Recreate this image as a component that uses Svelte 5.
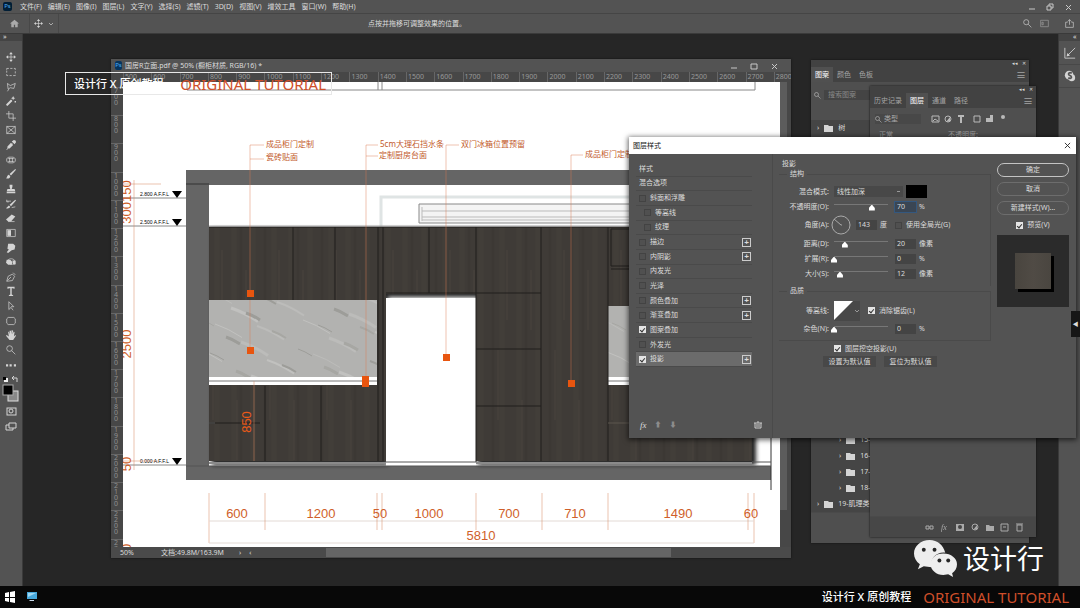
<script>
  const menus = ["文件(F)", "编辑(E)", "图像(I)", "图层(L)", "文字(Y)", "选择(S)", "滤镜(T)", "3D(D)", "视图(V)", "增效工具", "窗口(W)", "帮助(H)"];

  // line = stroked outline, solid = filled shape, both on a 14x14 grid
  const tools = [
    { name: "移动", line: "M7 2v10M2 7h10", solid: "M7 0l2.500 3h-5zM7 14l2.500-3h-5zM0 7l3-2.500v5zM14 7l-3-2.500v5z" },
    { name: "选框", line: "M1 2h3M6 2h3M11 2h2v2M13 6v3M13 11v1h-3M8 12H5M3 12H1v-2M1 8V5M1 4V2" },
    { name: "套索", line: "M2 2l4 3 7-3-2 7-5-1-3 2zM4 10l-2 3" },
    { name: "魔棒", line: "M1 13l7-7", solid: "M7 5l2 2-7 7-2-2zM10 0l1 2 2 1-2 1-1 2-1-2-2-1 2-1zM12 7h2v2h-2z" },
    { name: "裁剪", line: "M4 0v10h10M0 4h10v10" },
    { name: "图框", line: "M1 2h12v10H1zM1 2l12 10M13 2L1 12" },
    { name: "吸管", line: "M9 5l-7 7-1 2", solid: "M8 2l4 4 2-3c0-2-1-3-3-3zM7 4l3 3-5 5H2V9z" },
    { name: "修复", line: "M4 3h6l3 2v4l-3 2H4L1 9V5zM3 5h8M3 9h8M5 4v6M9 4v6" },
    { name: "画笔", solid: "M13 0l1 1-7 8-2-2zM4 8l2 2c0 3-3 4-6 3 2-1 1-4 4-5z" },
    { name: "图章", solid: "M5 1h4v3L8 7h4l1 3H1l1-3h4L5 4zM1 11h12v2H1z" },
    { name: "历史画笔", line: "M1 3h6M1 1v3h3M8 12l5-1", solid: "M13 1l1 1-7 8-2-2zM4 9l2 2c-1 2-3 3-6 2z" },
    { name: "橡皮", line: "M3 12h9", solid: "M8 2l5 3-6 7H3L0 9z" },
    { name: "渐变", line: "M1 2h12v10H1z", solid: "M2 3h5v8H2z" },
    { name: "涂抹", solid: "M3 1h7l3 3-1 5-4 1-5 4-2-1 3-4-2-1z" },
    { name: "减淡", line: "M2 5c3-4 9-3 11 1v4H6", solid: "M1 4h5l3 3-1 4H3L0 8zM9 5h4v5h-3z" },
    { name: "钢笔", line: "M1 13l2-7 6-3 3 3-3 6zM2 12l5-5M10 1l3 3" },
    { name: "文字", solid: "M2 1h10v3h-1l-1-1H8v9l2 1v1H4v-1l2-1V3H4L3 4H2z" },
    { name: "路径选择", line: "M4 1v11l3-3 3 4M4 1l7 7H7" },
    { name: "矩形", line: "M3 2h8l2 2v6l-2 2H3l-2-2V4z" },
    { name: "抓手", solid: "M3 3l1-1 1 4V1h2v5l1-6 2 1-1 5 2-4 1 1-1 6 2-2 1 1-4 6H5L0 8l1-1 3 2z" },
    { name: "缩放", line: "M9 5a4 4 0 1 1-8 0 4 4 0 0 1 8 0zM8 8l5 5" },
    { name: "更多", solid: "M0 6h3v3H0zM5 6h3v3H5zM11 6h3v3h-3z" },
  ];

  const hRuler = Array.from({ length: 24 }, (_, i) => 500 + i * 100);
  const vRuler = Array.from({ length: 17 }, (_, i) => 700 + i * 100);

  const effects = [
    { name: "斜面和浮雕" },
    { name: "等高线", sub: true },
    { name: "纹理", sub: true },
    { name: "描边", plus: true },
    { name: "内阴影", plus: true },
    { name: "内发光" },
    { name: "光泽" },
    { name: "颜色叠加", plus: true },
    { name: "渐变叠加", plus: true },
    { name: "图案叠加", on: true },
    { name: "外发光" },
    { name: "投影", on: true, plus: true, active: true },
  ];

  const sliders = [
    { id: "distance", label: "距离(D):", value: 20, pos: 20, unit: "像素" },
    { id: "spread", label: "扩展(R):", value: 0, pos: 0, unit: "%" },
    { id: "size", label: "大小(S):", value: 12, pos: 11, unit: "像素" },
  ];

  const folders = ["15-", "16-", "17-", "18-"];

  // elevation drawing
  const dims = [
    { x: 237, t: "600" },
    { x: 321, t: "1200" },
    { x: 380, t: "50" },
    { x: 429, t: "1000" },
    { x: 509, t: "700" },
    { x: 575, t: "710" },
    { x: 678, t: "1490" },
    { x: 751, t: "60" },
  ];
  const dimTicks = [265, 377, 382, 476, 542, 608, 748];
  const levels = [
    { y: 198, t: "2.800 A.F.F.L" },
    { y: 226, t: "2.500 A.F.F.L" },
    { y: 465, t: "0.000 A.F.F.L" },
  ];
  const notes = [
    { x: 266, y: 147, t: "成品柜门定制" },
    { x: 266, y: 160, t: "瓷砖贴面" },
    { x: 380, y: 147, t: "5cm大理石挡水条" },
    { x: 379, y: 158, t: "定制厨房台面" },
    { x: 461, y: 147, t: "双门冰箱位置预留" },
    { x: 585, y: 157, t: "成品柜门定制" },
  ];

  // marble veins, scattered with fixed steps so that they never line up
  const veinTones = ["#9d9d99", "#bcbcba", "#a7a7a3", "#c1c1bf"];
  const veins = Array.from({ length: 90 }, (_, i) => ({
    x: 190 + ((i * 67) % 500),
    y: 285 + ((i * 41) % 92),
    len: 14 + ((i * 13) % 26),
    tone: veinTones[i % 4],
    w: 1 + (i % 3),
  }));
</script>

{#snippet folder()}
  <svg class="folder" viewBox="0 0 9 7"><path d="M0 0h4l1 1h4v6H0z" /></svg>
{/snippet}

{#snippet lens()}
  <svg class="ico" viewBox="0 0 14 14"><path class="line" d={tools[20].line} /></svg>
{/snippet}

<div class="app">
  <header class="menubar">
    <span class="ps">Ps</span>
    <nav>
      {#each menus as m}<a href="#menu">{m}</a>{/each}
    </nav>
    <div class="win-btns">
      <button aria-label="最小化"><svg viewBox="0 0 8 8"><path d="M1 6h6" /></svg></button>
      <button aria-label="还原"><svg viewBox="0 0 8 8"><path d="M1 3h4v4H1zM3 3V1h4v4H5" /></svg></button>
      <button aria-label="关闭"><svg viewBox="0 0 8 8"><path d="M2 2l5 5M7 2L2 7" /></svg></button>
    </div>
  </header>

  <div class="options">
    <button class="home" aria-label="主页">
      <svg class="ico" viewBox="0 0 14 14"><path d="M7 1l7 6h-2v6H8V9H6v4H2V7H0z" /></svg>
    </button>
    <button class="current" aria-label="当前工具">
      <svg class="ico" viewBox="0 0 14 14"><path class="line" d={tools[0].line} /><path d={tools[0].solid} /></svg>
      <svg class="chev" viewBox="0 0 6 6"><path d="M1 2l2 2 2-2" /></svg>
    </button>
    <p>点按并拖移可调整效果的位置。</p>
    <div class="opt-right">
      <button aria-label="搜索">{@render lens()}</button>
      <button class="dim" aria-label="工作区">
        <svg class="ico" viewBox="0 0 14 14"><path class="line" d="M1 2h12v10H1zM3 5h2v4H3z" /></svg>
      </button>
      <button class="share" aria-label="共享">
        <svg class="ico" viewBox="0 0 14 14"><path class="line" d="M4 5H1v8h12V5h-3M7 9V1M4 4l3-3 3 3" /></svg>
      </button>
    </div>
  </div>

  <main class="workspace">
    <aside class="toolbar">
      <div class="grip">»</div>
      <div class="tools">
        {#each tools as t}
          <button aria-label={t.name}>
            <svg viewBox="0 0 14 14">
              {#if t.line}<path class="line" d={t.line} />{/if}
              {#if t.solid}<path d={t.solid} />{/if}
            </svg>
          </button>
        {/each}
      </div>
      <svg class="swatches" viewBox="0 0 23 58">
        <rect x="4" y="4" width="4" height="4" fill="#eee" /><rect x="3" y="3" width="3" height="3" fill="#000" />
        <path class="line" d="M13 4h4v4M14 2l-2 2 2 2" />
        <rect x="8" y="17" width="10" height="10" fill="#888" stroke="#ddd" />
        <rect x="3" y="11" width="10" height="10" fill="#000" stroke="#aaa" />
        <rect class="line" x="7" y="34" width="9" height="7" /><circle class="line" cx="11" cy="37" r="2" />
        <path class="line" d="M9 49h7v5H9zM9 51H6v5h7v-2" />
      </svg>
    </aside>

    <aside class="dock">
      <div class="grip">«</div>
      <button aria-label="画笔设置"><svg viewBox="0 0 14 14"><path class="line" d="M1 1v12h12M4 10l9-9" /><path d="M3 11l1-4 3 3z" /></svg></button>
      <button aria-label="资源库"><svg viewBox="0 0 14 14"><circle cx="6" cy="6" r="5" /><circle cx="9" cy="9" r="4" /><path class="cut" d="M9 4C7 2 4 4 6 6l2 1c2 2-1 4-3 2" /></svg></button>
    </aside>

    <section class="doc">
      <header>
        <span class="ps small">Ps</span>
        <h1>国房R立面.pdf @ 50% (橱柜材质, RGB/16) *</h1>
        <div class="win-btns">
          <button aria-label="最小化文档"><svg viewBox="0 0 8 8"><path d="M1 6h6" /></svg></button>
          <button aria-label="最大化文档"><svg viewBox="0 0 8 8"><path d="M1 2h6v5H1z" /></svg></button>
          <button aria-label="关闭文档"><svg viewBox="0 0 8 8"><path d="M2 2l5 5M7 2L2 7" /></svg></button>
        </div>
      </header>
      <div class="h-ruler">
        {#each hRuler as n}<span>{n}</span>{/each}
      </div>
      <div class="v-ruler">
        {#each vRuler as n}
          <div>{#each String(n) as c}<span>{c}</span>{/each}</div>
        {/each}
      </div>
      <div class="canvas">
        <svg viewBox="123 82 657 465" preserveAspectRatio="xMinYMin meet">
          <defs>
            <pattern id="wood" width="57" height="240" patternUnits="userSpaceOnUse">
              <rect width="57" height="240" fill="#3f3b37" />
              <path d="M6 0v240M25 0v240M46 0v240" stroke="#423e39" stroke-width="5" />
              <path d="M13 0v240M37 0v240" stroke="#3c3834" stroke-width="3" />
              <path d="M18 30v60M42 110v70M9 160v60M51 10v70" stroke="#48433d" />
            </pattern>
            <clipPath id="slabs"><path d="M209 300h168v77H209zM608 306h144v71H608z" /></clipPath>
            <filter id="soft"><feGaussianBlur stdDeviation="2" /></filter>
            <filter id="vein"><feGaussianBlur stdDeviation="0.7" /></filter>
          </defs>

          <path d="M187 82v8h568v-8M378 82v8M382 82v8" fill="none" stroke="#888" />

          <!-- walls -->
          <path d="M186 170h585v310H186z" fill="#656565" />
          <path d="M209 185h562v281H209z" fill="#fff" />
          <path d="M186 184h23M771 437v53" stroke="#333" />
          <path d="M381 227v-30h390" fill="none" stroke="#dfe4e4" stroke-width="3" />
          <path d="M419 204h240v19H419z" fill="#f4f4f4" stroke="#888" />
          <path d="M422 207v14M422 211h240M422 217h240M422 220h240" stroke="#bbb" />

          <!-- cabinets -->
          <path d="M212 229h544v236h-278V297h-90v168H212z" fill="#222" filter="url(#soft)" />
          <path d="M386 298h90v168h-90z" fill="#fff" />
          <path d="M387 295v168" stroke="#666" stroke-width="4" filter="url(#soft)" />
          <path d="M386 296h90" stroke="#777" stroke-width="3" filter="url(#soft)" />
          <path d="M209 227h543v234H476V294h-90v167H209z" fill="url(#wood)" />
          <g clip-path="url(#slabs)">
            <path d="M209 300h543v77H209z" fill="#b2b2b0" />
            <g filter="url(#vein)" fill="none">
              {#each veins as v}
                <path d="M{v.x} {v.y}q{v.len / 2} {v.len / 6} {v.len} {v.len / 2}" stroke={v.tone} stroke-width={v.w} />
              {/each}
            </g>
          </g>
          <path d="M209 377h168v8H209zM608 377h144v8H608z" fill="#fff" />
          <path d="M209 381h168M608 381h144" stroke="#777" />
          <path
            d="M209 227h543M293 227v73M335 227v73M378 227v234M383 227v234M429 227v66M386 293h155M476 227v235M541 227v234M608 227v234M265 386v75M321 386v75M209 423h51M476 349h65M476 406h65M611 229h141v37H611zM611 269h141v36"
            class="joint"
          />
          <path d="M608 423h144" stroke="#5c564f" />
          <path d="M209 463h177M476 463h276" stroke="#8a8a8a" stroke-width="2" />
          <path d="M386 462h90M752 462h19M186 466h585M209 423h6" stroke="#555" />
          <path d="M209 226h543" stroke="#aaa" />

          <!-- leaders -->
          <path d="M250 294V145h14M250 159h14M250 300v50M366 380V145h12M366 156h12M446 356V145h13M571 383V155h12" class="leader" />
          <path d="M247 290h7v7h-7zM247 347h7v7h-7zM362 376h7v11h-7zM443 354h7v7h-7zM568 380h7v7h-7z" fill="#e8550f" />
          {#each notes as n}<text class="note" x={n.x} y={n.y}>{n.t}</text>{/each}

          <!-- levels -->
          {#each levels as l}
            <path d="M123 {l.y}h63" stroke="#888" />
            <text class="level" x="140" y={l.y - 2}>{l.t}</text>
            <path d="M172 {l.y - 7}h10l-5 7z" />
          {/each}

          <!-- dimensions -->
          <path d="M134 180v290M123 184h38M123 461h36M254 381v80M209 493v50M754 493v50" class="dim-line" />
          <path d="M209 521h545M209 543h545" stroke="#e3dad5" />
          {#each dimTicks as x}<path d="M{x} 493v37" class="dim-line" />{/each}
          <g class="dim-text">
            {#each dims as d}<text x={d.x} y="518">{d.t}</text>{/each}
            <text x="481" y="540">5810</text>
            <text transform="translate(131 202) rotate(-90)">300150</text>
            <text transform="translate(131 344) rotate(-90)">2500</text>
            <text transform="translate(131 464) rotate(-90)">50</text>
            <text transform="translate(131 551) rotate(-90)">50</text>
            <text class="bright" transform="translate(251 422) rotate(-90)">850</text>
          </g>
        </svg>
      </div>
      <div class="v-scroll"><i></i></div>
      <footer>
        <span class="zoom">50%</span>
        <span class="size">文档:49.8M/163.9M</span>
        <span>›</span>
        <span>‹</span>
        <div class="h-scroll"><i></i></div>
      </footer>
    </section>

    <section class="panel patterns">
      <div class="panel-top"><span>◂◂</span><span>✕</span></div>
      <div class="tabs">
        <button class="active">图案</button><button>颜色</button><button>色板</button>
        <span class="burger">≡</span>
      </div>
      <label class="search">{@render lens()}<input placeholder="搜索图案" /></label>
      <div class="tree">
        <div class="node"><span>›</span>{@render folder()}树</div>
        <div class="rest">
          {#each folders as f}
            <div class="node child"><span>›</span>{@render folder()}{f}</div>
          {/each}
          <div class="node"><span>›</span>{@render folder()}19-肌理类</div>
        </div>
      </div>
      <div class="panel-foot"></div>
    </section>

    <section class="panel layers">
      <div class="panel-top"><span>◂◂</span><span>✕</span></div>
      <div class="tabs">
        <button>历史记录</button><button class="active">图层</button><button>通道</button><button>路径</button>
        <span class="burger">≡</span>
      </div>
      <div class="filter">
        <label>{@render lens()}<input value="类型" aria-label="筛选类型" /></label>
        <svg viewBox="0 0 78 12">
          <path class="line" d="M3 3h7v6H3zM4 8l2-2 3 2M45 3h6v6h-6z" />
          <circle class="line" cx="19" cy="6" r="3" />
          <path d="M21 4v4l-4 1zM29 2h6v2h-2v6h-2V4h-2zM57 5h4V2h3v7h-7z" />
          <circle cx="74" cy="4" r="2" />
        </svg>
      </div>
      <div class="blend"><span>正常</span><span>不透明度:</span></div>
      <div class="panel-foot">
        <svg viewBox="0 0 100 10">
          <path class="line" d="M2 4h3v3H2zM6 4h3v3H6zM77 2h7v7h-7zM79 5h3M93 3h5v6h-5zM92 2h7" />
          <path d="M32 2h8v7h-8zM62 3h3l1 1h4v5h-8zM53 3v4l-4 1z" />
          <circle cx="36" cy="5" r="2" fill="#444" />
          <circle class="line" cx="51" cy="5" r="3" />
          <text x="17" y="8">fx</text>
        </svg>
      </div>
    </section>

    <form class="dialog" onsubmit={(e) => e.preventDefault()}>
      <header>
        <h2>图层样式</h2>
        <button type="button" aria-label="关闭对话框"><svg viewBox="0 0 8 8"><path d="M1 1l6 6M7 1L1 7" /></svg></button>
      </header>
      <div class="dialog-body">
        <div class="styles">
          <div class="list">
            <div class="row plain">样式</div>
            <div class="row plain">混合选项</div>
            {#each effects as e}
              <div class="row" class:sub={e.sub} class:active={e.active}>
                <label><input type="checkbox" checked={e.on} />{e.name}</label>
                {#if e.plus}<button type="button" class="plus" aria-label="添加{e.name}">+</button>{/if}
              </div>
            {/each}
          </div>
          <div class="list-foot">
            <em>fx</em><span>⬆</span><span>⬇</span>
            <button type="button" aria-label="删除效果">
              <svg viewBox="0 0 8 8"><path d="M0 2h8M3 1h2M1 2v5h6V2M3 3v3M5 3v3" /></svg>
            </button>
          </div>
        </div>

        <fieldset class="shadow">
          <legend>投影</legend>
          <fieldset class="structure">
            <legend>结构</legend>
            <div class="field">
              <label class="name" for="blend">混合模式:</label>
              <select id="blend"><option>线性加深</option></select>
              <button type="button" class="colour" aria-label="阴影颜色"></button>
            </div>
            <div class="field">
              <label class="name" for="opacity">不透明度(O):</label>
              <input type="range" value="70" aria-label="不透明度滑块" />
              <input id="opacity" class="num focus" value="70" />
              <span>%</span>
            </div>
            <div class="field angle">
              <label class="name" for="angle">角度(A):</label>
              <svg class="dial" viewBox="0 0 21 21"><circle cx="10" cy="10" r="9" /><path d="M3 4l7 6h1" /></svg>
              <input id="angle" class="num" value="143" />
              <span>度</span>
              <label class="tick"><input type="checkbox" />使用全局光(G)</label>
            </div>
            {#each sliders as s}
              <div class="field">
                <label class="name" for={s.id}>{s.label}</label>
                <input type="range" value={s.pos} aria-label="{s.label}滑块" />
                <input id={s.id} class="num" value={s.value} />
                <span>{s.unit}</span>
              </div>
            {/each}
          </fieldset>
          <fieldset class="quality">
            <legend>品质</legend>
            <div class="field contour">
              <span class="name">等高线:</span>
              <button type="button" class="curve" aria-label="等高线">
                <svg viewBox="0 0 26 20"><path fill="#fff" d="M0 0h19L0 19z" /><path fill="none" stroke="#999" d="M21 9l2 2 2-2" /></svg>
              </button>
              <label class="tick"><input type="checkbox" checked />消除锯齿(L)</label>
            </div>
            <div class="field">
              <label class="name" for="noise">杂色(N):</label>
              <input type="range" value="0" aria-label="杂色滑块" />
              <input id="noise" class="num" value="0" />
              <span>%</span>
            </div>
          </fieldset>
          <label class="tick knock"><input type="checkbox" checked />图层挖空投影(U)</label>
          <div class="defaults">
            <button type="button">设置为默认值</button>
            <button type="button">复位为默认值</button>
          </div>
        </fieldset>

        <div class="actions">
          <button class="primary">确定</button>
          <button type="button">取消</button>
          <button type="button">新建样式(W)...</button>
          <label class="tick"><input type="checkbox" checked />预览(V)</label>
          <div class="preview"><i></i></div>
        </div>
      </div>
    </form>

    <button class="drawer" aria-label="展开">◀</button>

    <div class="badge">
      <span>设计行 X 原创教程</span>
      <strong>ORIGINAL TUTORIAL</strong>
    </div>

    <div class="wechat">
      <svg viewBox="0 0 44 38">
        <path d="M16 0C7 0 0 6 0 14c0 4 2 8 6 11l-2 5 6-3 8 1c-2-9 5-16 14-15C30 5 24 0 16 0z" />
        <path d="M30 14c-8 0-13 5-13 11s6 11 13 11l5-1 5 3-1-4c3-2 5-5 5-9 0-6-6-11-14-11z" />
        <g class="eyes">
          <circle cx="10" cy="10" r="2" /><circle cx="21" cy="10" r="2" />
          <circle cx="26" cy="21" r="2" /><circle cx="35" cy="21" r="2" />
        </g>
      </svg>
      <span>设计行</span>
    </div>
  </main>

  <footer class="taskbar">
    <button aria-label="开始">
      <svg viewBox="0 0 10 10"><path fill="#fff" d="M0 1l4-1v5H0zM5 0l5-1v6H5zM0 6h4v4L0 9zM5 6h5v5l-5-1z" /></svg>
    </button>
    <button aria-label="桌面">
      <svg viewBox="0 0 10 10"><path fill="#46a8dc" d="M0 0h10v7H0z" /><path fill="#9fd7f2" d="M1 1h8L1 5z" /><path fill="#cde" d="M3 8h4v1H2z" /></svg>
    </button>
    <span>设计行 X 原创教程</span>
    <strong>ORIGINAL TUTORIAL</strong>
  </footer>
</div>

<style>
  :global(body) { background: #262626; }

  .app {
    display: flex;
    flex-direction: column;
    height: 100vh;
    overflow: hidden;
    background: #262626;
    color: #dcdcdc;
    font: 7px/10px "Noto Sans", "Noto Sans CJK SC", sans-serif;
  }
  .app * { box-sizing: border-box; }
  button, input, select {
    margin: 0;
    padding: 0;
    border: 0;
    border-radius: 0;
    outline: none;
    background: none;
    color: inherit;
    font: inherit;
  }
  button { display: inline-flex; align-items: center; justify-content: center; }
  h1, h2, p { margin: 0; font: inherit; }
  svg { display: block; fill: #d4d4d4; }
  .line { fill: none; stroke: #d4d4d4; }
  .ico { width: 9px; height: 9px; }

  .menubar {
    display: flex;
    align-items: center;
    height: 14px;
    padding: 0 8px 0 3px;
    background: #535353;
    border-bottom: 1px solid #454545;
  }
  .ps {
    width: 9px;
    height: 9px;
    margin-right: 8px;
    border-radius: 2px;
    background: #001e36;
    color: #4fb0f5;
    font-size: 6px;
    line-height: 9px;
    text-align: center;
  }
  .ps.small { width: 7px; margin-right: 3px; background: #06345f; }
  nav { display: flex; gap: 6px; }
  nav a { color: inherit; text-decoration: none; white-space: nowrap; }
  .win-btns { display: flex; gap: 10px; margin-left: auto; }
  .win-btns svg { width: 8px; height: 8px; fill: none; stroke: #c8c8c8; }

  .options {
    display: flex;
    align-items: center;
    height: 20px;
    background: #535353;
    border-bottom: 1px solid #3a3a3a;
  }
  .home { width: 30px; height: 100%; border-right: 1px solid #484848; }
  .home svg { fill: #aaa; }
  .current { gap: 5px; width: 29px; height: 100%; border-right: 1px solid #484848; }
  .chev { width: 6px; height: 6px; fill: none; stroke: #aaa; }
  .options p { margin: 0 auto 0 309px; }
  .opt-right { display: flex; gap: 8px; padding-right: 6px; }
  .opt-right .dim { opacity: 0.6; }
  .opt-right .share { margin-left: 8px; }

  .workspace { position: relative; display: flex; flex: 1; justify-content: space-between; min-height: 0; }
  .toolbar { width: 23px; background: #535353; border-right: 1px solid #3a3a3a; }
  .grip { height: 16px; padding-left: 3px; background: linear-gradient(#444 7px, #535353 7px); line-height: 5px; }
  .tools { display: grid; grid-auto-rows: 1fr; height: 322px; }
  .tools svg { width: 10px; height: 10px; }
  .swatches { width: 23px; margin-top: 2px; }
  .dock { display: flex; flex-direction: column; width: 22px; background: #535353; border-left: 1px solid #3a3a3a; }
  .dock .grip { height: 8px; padding-left: 14px; }
  .dock button { height: 23px; border-bottom: 1px solid #484848; }
  .dock svg { width: 12px; height: 12px; }
  .cut { fill: none; stroke: #535353; stroke-width: 2; }

  .doc {
    position: absolute;
    inset: 25px 289px 28px 111px;
    display: grid;
    grid-template: 13px 10px 1fr 11px / 12px 1fr 11px;
    background: #535353;
    box-shadow: 0 0 2px #111;
  }
  .doc header { grid-column: 1 / -1; display: flex; align-items: center; padding: 0 13px 0 4px; }
  .doc header .win-btns { gap: 12px; }
  .h-ruler {
    grid-column: 1 / -1;
    display: flex;
    padding-left: 12px;
    overflow: hidden;
    background: #474747;
    color: #999;
  }
  .h-ruler span { flex: 0 0 calc(100% / 23.6); padding-left: 1px; border-left: 1px solid #666; }
  .v-ruler { overflow: hidden; padding-top: 5px; background: #474747; color: #909090; }
  .v-ruler div { height: calc(100% / 16.3); padding-left: 3px; border-top: 1px solid #666; line-height: 6px; }
  .v-ruler span { display: block; }
  .canvas { overflow: hidden; background: #fff; }
  .canvas svg { width: 100%; height: 100%; fill: #000; }
  .v-scroll { background: #474747; }
  .v-scroll i { display: block; width: 7px; height: 92%; background: #5c5c5c; }
  .doc footer {
    grid-column: 1 / -1;
    display: flex;
    align-items: center;
    gap: 8px;
    padding-left: 9px;
    background: #4a4a4a;
  }
  .zoom { width: 33px; }
  .size { width: 70px; white-space: nowrap; }
  .h-scroll { flex: 1; height: 9px; padding: 0 120px 0 67px; }
  .h-scroll i { display: block; height: 100%; background: #656565; }

  .joint { fill: none; stroke: #211f1c; }
  .leader { fill: none; stroke: #d9784f; stroke-opacity: 0.45; }
  .note { fill: #c2592a; font-size: 8px; }
  .level { font: 5px "Liberation Sans", sans-serif; }
  .dim-line { fill: none; stroke: #d9895f; stroke-opacity: 0.5; }
  .dim-text { fill: #cf5f2a; font: 13px "Liberation Sans", sans-serif; text-anchor: middle; }
  .bright { fill: #ec5a18; }

  .panel { position: absolute; display: flex; flex-direction: column; background: #4f4f4f; box-shadow: 0 0 2px #111; }
  .patterns { inset: 26px 51px 43px auto; width: 218px; }
  .layers { inset: 52px 44px 49px auto; width: 166px; }
  .panel-top { display: flex; justify-content: flex-end; gap: 4px; height: 7px; padding: 0 3px; background: #424242; font-size: 5px; line-height: 7px; }
  .tabs { display: flex; align-items: center; height: 15px; background: #424242; color: #a5a5a5; }
  .tabs button { height: 100%; padding: 0 4px; }
  .tabs .active { background: #505050; color: #fff; }
  .burger { margin-left: auto; padding-right: 3px; font-size: 10px; }
  .search { display: flex; align-items: center; gap: 3px; height: 38px; padding: 0 3px 12px; }
  .search .ico, .filter .ico { width: 7px; height: 7px; }
  .search input { flex: 1; min-width: 0; height: 10px; padding-left: 4px; background: #444; }
  .search input::placeholder { color: #888; }
  .tree { display: flex; flex: 1; flex-direction: column; justify-content: space-between; background: #454545; }
  .node { display: flex; align-items: center; gap: 5px; height: 16px; padding-left: 6px; white-space: nowrap; }
  .child { padding-left: 28px; }
  .folder { width: 9px; height: 7px; }
  .panel-foot { height: 31px; border-top: 1px solid #4a4a4a; }
  .filter { display: flex; align-items: center; gap: 8px; height: 22px; padding-left: 5px; }
  .filter label { display: flex; align-items: center; gap: 2px; width: 46px; background: #484848; color: #aaa; }
  .filter input { width: 30px; }
  .filter > svg { width: 78px; height: 12px; opacity: 0.8; }
  .blend { display: flex; gap: 55px; padding: 0 9px; color: #999; }
  .layers .panel-foot { display: flex; align-items: center; justify-content: flex-end; height: 21px; margin-top: auto; padding-right: 12px; background: #474747; }
  .layers .panel-foot svg { width: 100px; height: 10px; opacity: 0.7; font: italic 8px "Liberation Serif", serif; }

  .dialog {
    position: absolute;
    top: 103px;
    right: 4px;
    width: 447px;
    background: #535353;
    box-shadow: 0 1px 5px 1px #0009;
  }
  .dialog header {
    display: flex;
    align-items: center;
    justify-content: space-between;
    height: 17px;
    padding: 0 5px 0 4px;
    background: #fff;
    color: #111;
  }
  .dialog header svg { width: 7px; height: 7px; fill: none; stroke: #222; }
  .dialog-body { display: grid; grid-template-columns: 144px 1fr 79px; column-gap: 6px; height: 284px; }

  .styles { display: flex; flex-direction: column; justify-content: space-between; padding: 8px 10px 8px 7px; border-right: 1px solid #4a4a4a; }
  .list { display: grid; grid-auto-rows: 1fr; height: 205px; margin-right: 10px; }
  .row { display: flex; align-items: center; justify-content: space-between; padding: 0 1px 0 3px; border-bottom: 1px solid #4a4a4a; }
  .row label, .tick { display: flex; align-items: center; gap: 4px; white-space: nowrap; }
  .row.sub { padding-left: 8px; }
  .row.active { background: #6b6b6b; }
  .plus { width: 9px; height: 9px; border: 1px solid #ccc; font: bold 8px/7px "Liberation Sans", sans-serif; }
  .list-foot { display: flex; align-items: center; gap: 8px; padding-left: 4px; color: #8c8c8c; }
  .list-foot em { color: #ddd; font: italic 9px "Liberation Serif", serif; }
  .list-foot button { margin-left: auto; }
  .list-foot svg { width: 8px; height: 8px; fill: none; stroke: #ccc; }

  input[type="checkbox"] { appearance: none; flex: none; width: 7px; height: 7px; border: 1px solid #434343; background: #505050; }
  input[type="checkbox"]:checked { border-color: #e4e4e4; background: #e4e4e4; }
  input[type="checkbox"]:checked::after {
    content: "";
    display: block;
    width: 2px;
    height: 4px;
    margin-left: 1px;
    border: solid #333;
    border-width: 0 1px 1px 0;
    rotate: 40deg;
  }

  fieldset { min-width: 0; margin: 0; padding: 0; border: 0; }
  legend { display: block; padding: 0 3px; height: 10px; }
  .shadow { padding: 5px 0 0; }
  .shadow > legend { float: left; margin-bottom: 0; }
  .structure, .quality { clear: both; padding: 5px 0; border: solid #4a4a4a; border-width: 1px 1px 0 0; }
  .structure > legend, .quality > legend { margin-left: 8px; }
  .quality { padding: 4px 0; border-bottom-width: 1px; }
  .field { display: flex; align-items: center; height: 15px; }
  .name { width: 50px; margin-right: 5px; text-align: right; white-space: nowrap; }
  select { appearance: none; width: 69px; height: 11px; padding-left: 3px; background: #484848 linear-gradient(#999, #999) 63px 5px / 3px 1px no-repeat; }
  .colour { width: 21px; height: 13px; margin-left: 3px; background: #000; }
  .num { width: 21px; height: 10px; margin: 0 3px 0 7px; padding-left: 2px; background: #444; }
  .num.focus { background: #3a4654; box-shadow: 0 0 0 1px #34587f; }
  .angle { height: 22px; }
  .dial { width: 21px; height: 21px; margin-left: -3px; fill: none; stroke: #aaa; }
  .angle .num { margin-left: 4px; }
  .angle .tick { margin-left: 8px; }
  .contour { height: 21px; }
  .curve svg { width: 26px; height: 20px; background: #484848; }
  .contour .tick { margin-left: 8px; }
  .knock { height: 15px; margin-left: 55px; }
  .defaults { display: flex; gap: 8px; margin-left: 44px; }
  .defaults button { width: 53px; height: 11px; background: #484848; white-space: nowrap; }

  /* the thumb hangs over both ends of the 54px track */
  input[type="range"] { appearance: none; width: 60px; height: 12px; margin: 0 -3px; }
  input[type="range"]::-webkit-slider-runnable-track { height: 8px; background: linear-gradient(#777, #777) center 1px / 54px 1px no-repeat; }
  input[type="range"]::-webkit-slider-thumb {
    appearance: none;
    width: 6px;
    height: 6px;
    margin-top: 2px;
    background: #fff;
    clip-path: polygon(50% 0, 100% 60%, 100% 100%, 0 100%, 0 60%);
  }

  .actions { display: flex; flex-direction: column; gap: 5px; padding: 9px 7px 0 0; }
  .actions button { height: 14px; border: 1px solid #6d6d6d; border-radius: 7px; }
  .actions .primary { border-color: #c4c4c4; }
  .actions .tick { justify-content: center; }
  .preview { display: grid; place-items: center; aspect-ratio: 1; background: #2b2b2b; }
  .preview i { width: 36px; height: 36px; background: linear-gradient(90deg, #49453f, #504b45, #4a4640); box-shadow: 3px 3px 0 #000; }

  .drawer { position: absolute; top: 277px; right: 0; width: 9px; height: 26px; background: #161616; font-size: 6px; }

  .badge {
    position: absolute;
    top: 38px;
    left: 65px;
    display: flex;
    align-items: center;
    justify-content: space-between;
    width: 267px;
    height: 23px;
    padding: 0 5px 0 8px;
    border: 1px solid #e8e8e8;
  }
  .badge span, .taskbar span { color: #fff; font-size: 11px; font-weight: 500; white-space: nowrap; }
  .badge strong, .taskbar strong { color: #cf4f2a; font-size: 15px; font-weight: 400; white-space: nowrap; }

  .wechat { position: absolute; right: 36px; bottom: 8px; display: flex; align-items: center; gap: 6px; color: #fff; font-size: 27px; line-height: 38px; }
  .wechat svg { width: 43px; height: 39px; fill: #eee; }
  .eyes { fill: #262626; }

  .taskbar { display: flex; align-items: center; gap: 12px; height: 22px; padding: 0 11px 0 5px; background: #080808; }
  .taskbar svg { width: 10px; height: 10px; overflow: visible; }
  .taskbar span { margin-left: auto; }
</style>
